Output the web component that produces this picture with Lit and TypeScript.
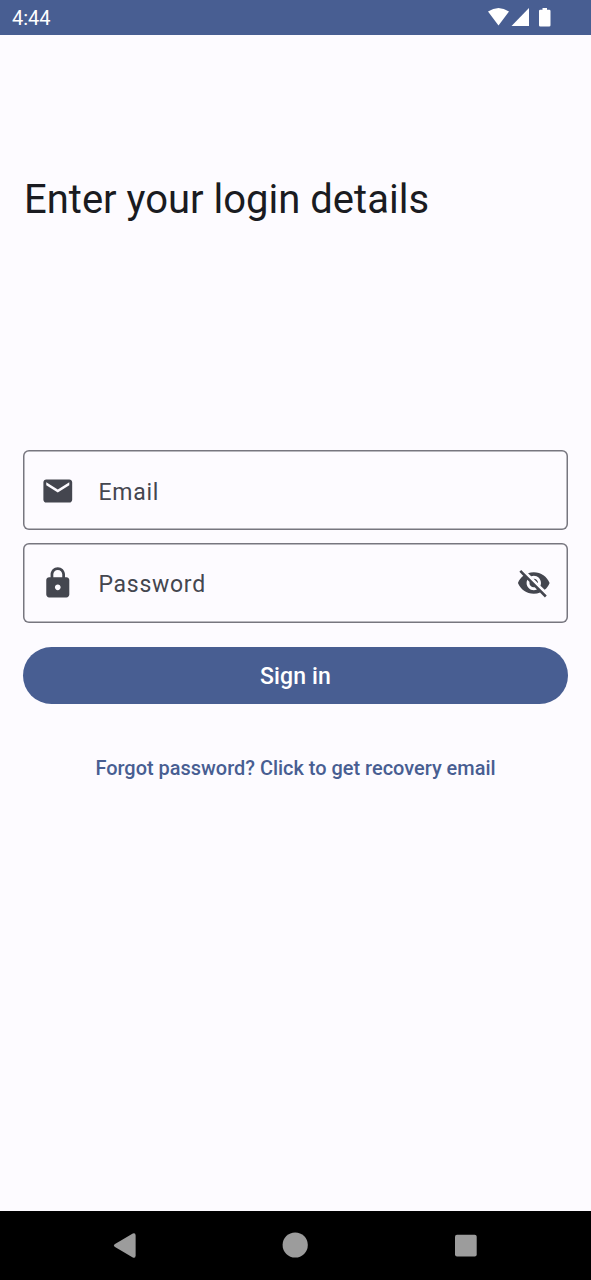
import { LitElement, html, css, svg } from "lit";
import { customElement, property } from "lit/decorators.js";

const mail = svg`<path d="M20 4H4c-1.100 0-1.990.9-1.990 2L2 18c0 1.100.9 2 2 2h16c1.100 0 2-.9 2-2V6c0-1.100-.9-2-2-2zm0 4l-8 5-8-5V6l8 5 8-5v2z"/>`;
const lock = svg`<path d="M18 8h-1V6c0-2.760-2.240-5-5-5S7 3.240 7 6v2H6c-1.100 0-2 .9-2 2v10c0 1.100.9 2 2 2h12c1.100 0 2-.9 2-2V10c0-1.100-.9-2-2-2zm-6 9c-1.100 0-2-.9-2-2s.9-2 2-2 2 .9 2 2-.9 2-2 2zm3.100-9H8.900V6c0-1.710 1.390-3.100 3.100-3.100s3.100 1.390 3.100 3.100v2z"/>`;
const eyeOff = svg`<path d="M12 7c2.760 0 5 2.240 5 5 0 .65-.13 1.260-.36 1.830l2.920 2.920c1.510-1.260 2.700-2.890 3.430-4.750-1.730-4.390-6-7.500-11-7.500-1.400 0-2.740.25-3.980.7l2.160 2.160C10.740 7.130 11.350 7 12 7zM2 4.270l2.280 2.280.46.46C3.080 8.300 1.780 10.020 1 12c1.730 4.390 6 7.500 11 7.500 1.550 0 3.030-.3 4.380-.84l.42.42L19.730 22 21 20.730 3.270 3 2 4.270zM7.530 9.800l1.550 1.550c-.05.21-.08.43-.08.65 0 1.660 1.340 3 3 3 .22 0 .44-.03.65-.08l1.550 1.550c-.67.33-1.410.53-2.200.53-2.760 0-5-2.240-5-5 0-.79.2-1.530.53-2.200zm4.310-.78l3.150 3.150.02-.16c0-1.660-1.340-3-3-3l-.17.01z"/>`;

@customElement("login-field")
class LoginField extends LitElement {
  @property() label = "";
  @property({ attribute: false }) lead: unknown;
  @property({ attribute: false }) trail: unknown;

  static styles = css`
    :host { display: block; }
    .field {
      box-sizing: border-box;
      height: 80px;
      box-shadow: inset 0 0 0 1.500px #77767f;
      border-radius: 6px;
      display: flex;
      align-items: center;
      padding: 1px 16px 0 17px;
    }
    .icon { width: 36px; height: 36px; fill: #44464f; flex: none; }
    .label {
      flex: 1;
      padding-top: 3.500px;
      margin-left: 22.500px;
      font-size: 23px;
      line-height: 34px;
      letter-spacing: 0.720px;
      color: #44464f;
    }
  `;

  render() {
    return html`<div class="field">
      <svg class="icon" viewBox="-0.350 -0.500 25 25">${this.lead}</svg>
      <span class="label">${this.label}</span>
      ${this.trail ? html`<svg class="icon" viewBox="-0.350 -0.500 25 25">${this.trail}</svg>` : ""}
    </div>`;
  }
}

@customElement("app-root")
class AppRoot extends LitElement {
  static styles = css`
    :host {
      display: flex;
      flex-direction: column;
      height: 1280px;
      background: #fdfbff;
      font-family: Roboto, sans-serif;
      overflow: hidden;
    }
    .status {
      box-sizing: border-box;
      height: 35px;
      flex: none;
      background: #485e92;
      color: #fff;
      display: flex;
      justify-content: space-between;
      padding: 0 38px 0 12px;
      font-size: 20px;
      line-height: 37px;
    }
    .signals { width: 66px; height: 35px; fill: #fff; }
    main { flex: 1; display: flex; flex-direction: column; padding: 0 23px; }
    h1 {
      margin: 138.500px 0 0 1px;
      font-size: 40px;
      line-height: 52px;
      font-weight: 400;
      color: #1a1b21;
      white-space: nowrap;
    }
    .fields { margin-top: 224.900px; display: grid; gap: 12.600px; }
    button { font-family: inherit; border: 0; padding: 0; font-weight: 500; }
    .primary {
      margin-top: 24px;
      height: 57px;
      border-radius: 29px;
      background: #485e92;
      color: #fff;
      font-size: 23px;
      letter-spacing: 0.140px;
      line-height: 59px;
    }
    .link {
      margin-top: 50px;
      background: none;
      color: #485e92;
      font-size: 19.960px;
      line-height: 28px;
      white-space: nowrap;
    }
    .nav { height: 69px; flex: none; background: #000; }
    .nav svg { display: block; width: 591px; height: 69px; fill: #9c9c9c; }
  `;

  render() {
    return html`
      <header class="status">
        <span>4:44</span>
        <svg class="signals" viewBox="487 0 66 35">
          <path d="M488 11.500Q498.500 4.500 509 11.500L498.500 25.500Z" />
          <path d="M529 8V26H511.500Z" />
          <path d="M542.500 8h4.500v1.700h2.200q1.300 0 1.300 1.300v14.300q0 1.300-1.300 1.300h-8.900q-1.300 0-1.300-1.300V11q0-1.300 1.300-1.300h2.200z" />
        </svg>
      </header>
      <main>
        <h1>Enter your login details</h1>
        <div class="fields">
          <login-field label="Email" .lead=${mail}></login-field>
          <login-field label="Password" .lead=${lock} .trail=${eyeOff}></login-field>
        </div>
        <button class="primary">Sign in</button>
        <button class="link">Forgot password? Click to get recovery email</button>
      </main>
      <footer class="nav">
        <svg viewBox="0 1211 591 69">
          <path d="M114.600 1244.300L132.800 1233.500Q135.600 1232.500 135.600 1235.500V1255.500Q135.600 1258.500 132.800 1257.400L114.600 1246.700Q113 1245.500 114.600 1244.300Z" />
          <circle cx="295.200" cy="1245" r="12.600" />
          <rect x="455" y="1234.700" width="21.700" height="21.700" rx="2" />
        </svg>
      </footer>
    `;
  }
}
